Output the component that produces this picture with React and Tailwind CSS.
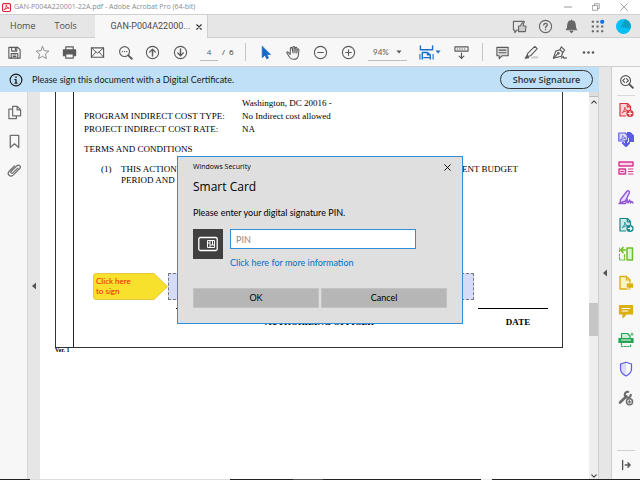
import React, { useState } from 'react';
import { clsx } from 'clsx';

const Icon = ({ size = 16, className, children }) => (
    <svg
        width={size}
        height={size}
        viewBox="0 0 16 16"
        fill="none"
        stroke="currentColor"
        strokeWidth="1.2"
        strokeLinejoin="round"
        strokeLinecap="round"
        className={className}
        aria-hidden="true"
    >
        {children}
    </svg>
);

const fileIcons = [
    { label: 'Save', art: <><path d="M2 2.5h9.5l2.5 2.5v9H2z" /><path d="M5 2.5v4h5.5v-4M4.5 14V9h7v5M6.5 10.7h3M6.5 12.4h3" /><path d="M9 3.5v2" /></> },
    { label: 'Star', className: 'text-[#8a8a8a]', art: <path d="M8 1.6l1.9 4.5 4.9.4-3.7 3.2 1.1 4.8L8 12l-4.2 2.5 1.1-4.8L1.2 6.5l4.9-.4z" strokeWidth="1" /> },
    { label: 'Print', art: <><path d="M4 5V2h8v3" /><path d="M1.5 5.2h13v6.3H12V9.5H4v2H1.5z" fill="currentColor" /><path d="M4 9.5h8V14H4z" fill="#f7f7f7" /></> },
    { label: 'Email', art: <><path d="M1.5 3h13v10h-13z" /><path d="M1.5 3L8 8.8 14.5 3M1.5 13l4.7-5.5M14.5 13L9.8 7.5" strokeWidth="1" /></> },
    { label: 'Find', art: <><circle cx="7" cy="7" r="5.3" /><path d="M11 11l3.7 3.7" strokeWidth="2" /><path d="M4.7 7h.1M7 7h.1M9.3 7h.1" strokeWidth="1.4" /></> },
    { label: 'Previous page', art: <><circle cx="8" cy="8" r="6.5" /><path d="M8 11.7V4.8M5 7.6l3-3 3 3" strokeWidth="1.5" /></> },
    { label: 'Next page', art: <><circle cx="8" cy="8" r="6.5" /><path d="M8 4.3v6.9M5 8.4l3 3 3-3" strokeWidth="1.5" /></> },
];

const viewIcons = [
    { label: 'Select', className: 'text-[#1469c4]', art: <path d="M4.5 1.5v12l3-2.7 1.8 4 1.9-.9-1.8-3.8H13z" fill="currentColor" strokeWidth=".8" /> },
    { label: 'Hand', art: <path d="M4.5 10L2.3 7.6c-.7-.8-1.9.1-1.3 1l3 4.7c1 1.4 2.3 2 4.2 2 3 0 4.8-1.7 5-4.5l.6-5.6c0-1.1-1.5-1.2-1.7-.1l-.6 3.6.1-5.5c0-1.2-1.6-1.2-1.7 0l-.3 5.2-.5-6c-.1-1.2-1.7-1.1-1.7 0l.1 6-1.2-5.2c-.3-1.1-1.8-.8-1.6.4z" strokeWidth="1.1" /> },
    { label: 'Zoom out', art: <><circle cx="8" cy="8" r="6.5" /><path d="M5 8h6" /></> },
    { label: 'Zoom in', art: <><circle cx="8" cy="8" r="6.5" /><path d="M5 8h6M8 5v6" /></> },
];

const markIcons = [
    { label: 'Comment', art: <><path d="M2 2.5h12v9H7.5l-3 3v-3H2z" fill="#dcdcdc" /><path d="M4.5 5.5h7M4.5 8.3h7" /></> },
    { label: 'Highlight', art: <><path d="M7 14.5h8v-2.5H9z" fill="#cfcfcf" stroke="none" /><path d="M4 9L11.5 1.5l2.6 2.3L7 11.5l-3.7.7z" /><path d="M3.3 11l-2 3.2 3.7-.7z" fill="currentColor" /></> },
    { label: 'Sign', art: <><path d="M1.5 14L4 6.5l4.5-1.5 3 3L10 12z" /><path d="M8.5 5l1.5-3 3.5 3.5-2 2.5M1.5 14L6 9.5" /><circle cx="6.8" cy="8.9" r=".9" /><path d="M10 14l2-1.8.5 1.8 3-.3" /></> },
    { label: 'More tools', art: <g fill="currentColor" stroke="none"><circle cx="3.2" cy="8" r="1.4" /><circle cx="8" cy="8" r="1.4" /><circle cx="12.8" cy="8" r="1.4" /></g> },
];

const pdfSheet = <><path d="M2 1.5h7.5l3 3v4M2 1.5v12.5h5.5" /><path d="M9.3 1.5v3.3h3.2" /><path d="M4.5 10.5C6.5 8.5 7 6.5 6.7 5.3c.6 2.5 2 3.4 3.6 3.5-2 0-4 .4-5.8 1.7z" strokeWidth=".9" /></>;

const tools = [
    { label: 'Create PDF', className: 'text-[#d7373f]', art: <><path d="M2 1.5h8l2.5 3V14H2z" fill="#f9d5d7" stroke="none" />{pdfSheet}<circle cx="12" cy="11.5" r="3.6" fill="currentColor" stroke="none" /><path d="M12 9.7v3.6M10.2 11.5h3.6" stroke="#fff" /></> },
    { label: 'Combine files', className: 'text-[#5c5ce0]', art: <><path d="M9 1h3.5L16 4.5V11h-5V7.5L9 5z" fill="currentColor" stroke="none" /><path d="M.8 2h6.5l2.2 2.5V10H.8z" fill="#dcdcfa" /><path d="M2.8 8.5C4.5 7 5 5.5 4.8 4.5 5.3 6.2 6.3 7 7.5 7z" strokeWidth=".8" /><path d="M8 9.5v5M5 12l3 3 3-3" strokeWidth="2.2" /></> },
    { label: 'Organize pages', className: 'text-[#d83790]', art: <><path d="M1 2h14v4H1zM1 9h6.5v5H1z" fill="#f9d3e7" strokeWidth="1.4" /><path d="M10.5 9h4.5M10.5 11.5h4.5M10.5 14h4.5M3 11.5h2.5" strokeWidth="1" /></> },
    { label: 'Fill and sign', className: 'text-[#9256d9]', art: <><path d="M2.5 10.5L9 2.2c1-1 3 .1 2.300 1.800L7.500 12l-5.500 2z" fill="#e9dcfa" strokeWidth="1.4" /><path d="M1 14.500h6.500l1.800-4 .7 3.500 1.800-3 .7 3 1.300-1.500 1.200 1.500" strokeWidth="1.4" /></> },
    { label: 'Export PDF', className: 'text-[#16878c]', art: <><path d="M2 1.5h8l2.5 3V14H2z" fill="#cfe9ea" stroke="none" />{pdfSheet}<circle cx="12" cy="11.5" r="3.6" fill="currentColor" stroke="none" /><path d="M10.2 11.5h3.4M12.3 9.9l1.5 1.6-1.5 1.6" stroke="#fff" /></> },
    { label: 'Compare', className: 'text-[#6cbf2c]', art: <><path d="M9 2h5.5v12H9z" fill="#e0f4cf" strokeWidth="1.5" /><path d="M1.5 8v6h5M1.5 5.5V2M6.5 8.5v5.5" strokeDasharray="2 1.3" /><path d="M5 1.5L2.8 4 5 6.500M3 4h4.500" strokeWidth="1.7" /></> },
    { label: 'Prepare form', className: 'text-[#dbb112]', art: <><path d="M2 1.5h6.5l3.5 3.5v9H2z" fill="#fbf1c5" strokeWidth="1.4" /><path d="M8.5 1.5V5H12" /><path d="M8.5 8h7v5h-2.800l-2 2v-2H8.500z" fill="currentColor" stroke="#f8f8f8" strokeWidth=".7" /></> },
    { label: 'Comment tool', className: 'text-[#dbb112]', art: <><path d="M1.5 2.5h13v8.5H8.2L5 14.5V11H1.5z" fill="currentColor" /><path d="M4.2 5.5h7.6M4.2 8h5.6" stroke="#fff" /></> },
    { label: 'Scan and OCR', className: 'text-[#23a455]', art: <><path d="M3.5 6V1.5h6L12 4v2" fill="#d0efda" /><path d="M1 6.5h14v4H1z" fill="currentColor" /><path d="M3.5 8h9" stroke="#f8f8f8" /><path d="M3.5 11.5v3h9v-3" strokeDasharray="1.5 1.5" /><path d="M14 1v2.5M12.8 2.2h2.4" strokeWidth=".8" /></> },
    { label: 'Protect', className: 'text-[#5c5ce0]', art: <><path d="M8 1.2L2.5 3v5c0 3 2 5.3 5.5 7z" fill="#dcdcfa" stroke="none" /><path d="M8 1.2L13.5 3v5c0 3-2 5.3-5.5 7-3.5-1.7-5.5-4-5.5-7V3z" /></> },
    { label: 'More tools panel', className: 'text-[#6e6e6e]', art: <><path d="M2 12.5L8.5 6.3" strokeWidth="2.6" /><path d="M12.8 4.8a3 3 0 1 1-2.6-3" strokeWidth="2.2" /><circle cx="11.5" cy="11.8" r="3" fill="#f8f8f8" strokeWidth="1.5" /><path d="M11.5 10.6v2.4M10.3 11.8h2.4" /></> },
];

function IconButtons({ items, className, size }) {
    return (
        <div className={clsx('grid items-center', className)}>
            {items.map(item => (
                <button key={item.label} type="button" aria-label={item.label} className={clsx('flex justify-center', item.className)}>
                    <Icon size={size}>{item.art}</Icon>
                </button>
            ))}
        </div>
    );
}

function TitleBar() {
    return (
        <header className="flex h-[14px] shrink-0 items-center bg-white pl-[2px] pr-3 text-[#8c8c8c]">
            <Icon size={9} className="text-[#d7262e]">
                <rect x="1" y="1" width="14" height="14" rx="2" fill="#fff" strokeWidth="2" />
                <path d="M4 12C7 9 8 6 7.5 3.5 8.5 7.5 10 9 12.5 9 9.5 9 6.5 10 4 12z" strokeWidth="1.7" />
            </Icon>
            <h1 className="ml-[3px] flex-1 text-[7px] leading-3">GAN-P004A220001-22A.pdf - Adobe Acrobat Pro (64-bit)</h1>
            <div className="flex items-center gap-5">
                <button type="button" aria-label="Minimize"><Icon size={8}><path d="M1 8h14" strokeWidth="1.8" /></Icon></button>
                <button type="button" aria-label="Restore"><Icon size={8}><path d="M1.5 5h9.5v9.5H1.5zM5 5V1.5h9.5V11H11" strokeWidth="1.6" /></Icon></button>
                <button type="button" aria-label="Close window"><Icon size={8}><path d="M1.5 1.5l13 13M14.5 1.5l-13 13" strokeWidth="1.6" /></Icon></button>
            </div>
        </header>
    );
}

function TabBar() {
    return (
        <nav className="flex h-6 shrink-0 border-t border-[#cfcfcf] bg-[#e6e6e6] text-[9px] text-[#4b4b4b]">
            <button type="button" className="border-b border-[#cfcfcf] pl-[10px] pr-[9px]">Home</button>
            <button type="button" className="w-[51px] border-b border-[#cfcfcf] pl-[10px] text-left">Tools</button>
            <button type="button" className="flex w-[113px] items-center justify-end gap-[6px] border-r border-[#cfcfcf] bg-[#f7f7f7] pr-[5px]">
                <span className="font-[Roboto,sans-serif]">GAN-P004A22000...</span>
                <Icon size={6} className="text-[#333]"><path d="M2 2l12 12M14 2L2 14" strokeWidth="3" /></Icon>
            </button>
            <div className="flex flex-1 items-center justify-end gap-[11px] border-b border-[#cfcfcf] pr-[9px] text-[#666]">
                <button type="button" aria-label="Feedback">
                    <Icon size={15}>
                        <path d="M7 2.5H1.5v9.2H3v2.8l2.5-2.8h1M7 2.5h6V4" />
                        <path d="M7 7.5h1.8L11 4c1.3-.2 1.5 1 1 3.5h3l-.8 6H7z" fill="#ccc" />
                    </Icon>
                </button>
                <button type="button" aria-label="Help">
                    <Icon size={15}><circle cx="8" cy="8" r="6.5" /><path d="M6.2 6.5c0-2.5 3.7-2.3 3.7-.2C9.9 7.7 8 7.7 8 9.3M8 11.4v.1" strokeWidth="1.4" /></Icon>
                </button>
                <button type="button" aria-label="Notifications">
                    <Icon size={15}><path d="M8 2C5 2 4 4.5 4 7c0 2.5-.6 3.5-1.5 4.5h11C12.6 10.5 12 9.5 12 7c0-2.5-1-5-4-5zM6.5 13h3L8 14.5zM8 1.2V2" fill="currentColor" /></Icon>
                </button>
                <button type="button" aria-label="Apps">
                    <Icon size={15}>
                        <path d="M3 3h.1M8 3h.1M3 8h.1M8 8h.1M13 8h.1M3 13h.1M8 13h.1M13 13h.1" strokeWidth="2.2" strokeLinecap="square" />
                        <circle cx="13" cy="3" r="2.3" fill="#1473e6" stroke="none" />
                    </Icon>
                </button>
                <button type="button" aria-label="Account">
                    <Icon size={15}><circle cx="8" cy="8" r="8" fill="#00c0f5" stroke="none" /><path d="M9.5.2A8 8 0 0 1 15.5 10L5 8.5z" fill="#0f9fc0" stroke="none" /></Icon>
                </button>
            </div>
        </nav>
    );
}

function Toolbar({ page, setPage }) {
    return (
        <div className="flex h-7 shrink-0 items-center bg-[#f7f7f7] pl-px text-[8px] text-[#5a5a5a]">
            <IconButtons items={fileIcons} size={15} className="w-[193px] grid-cols-7" />
            <input
                aria-label="Page number"
                value={page}
                onChange={e => setPage(e.target.value)}
                className="ml-[6px] h-[18px] w-[18px] border-b border-[#bdbdbd] text-center text-[#4b5a8a] outline-none"
            />
            <span className="ml-[4px] w-[23px] whitespace-pre text-[#333]">/  6</span>
            <div className="h-[18px] w-px bg-[#c6c6c6]" />
            <IconButtons items={viewIcons} size={15} className="ml-[6px] w-[110px] grid-cols-4" />
            <button type="button" className="ml-[6px] flex h-[18px] w-[39px] items-center justify-between border-b border-[#bdbdbd] px-[5px] font-[Lato,sans-serif]">
                94%
                <Icon size={6}><path d="M1 4h14l-7 8z" fill="currentColor" stroke="none" /></Icon>
            </button>
            <button type="button" aria-label="Fit width" className="ml-[12px] flex items-center gap-px text-[#1b6fc8]">
                <Icon size={15}>
                    <path d="M1.5 1v4h13V1M3.5 15V8H9l3 2.5V15M9 8v2.5h3" strokeWidth="1.5" />
                    <path d="M1 10v5M15 10v5M5 13.5h6" />
                </Icon>
                <Icon size={6}><path d="M1 4h14l-7 8z" fill="currentColor" stroke="none" /></Icon>
            </button>
            <button type="button" aria-label="Page display" className="ml-[13px]">
                <Icon size={15}><path d="M1 2h14v4.5H1zM8 8.5v6M5.5 11.8L8 14.3l2.5-2.5" /><path d="M3.5 4.3h9" strokeDasharray=".5 2" /></Icon>
            </button>
            <div className="ml-[13px] h-[18px] w-px bg-[#c6c6c6]" />
            <IconButtons items={markIcons} size={15} className="ml-[5px] w-[115px] grid-cols-4" />
        </div>
    );
}

function SignBanner() {
    return (
        <div className="flex h-[25px] shrink-0 items-center bg-[#bfe0f6] pl-[9px] pr-[6px] text-[#1a1a1a]">
            <Icon size={14}><circle cx="8" cy="8" r="6.7" strokeWidth="1.3" /><path d="M8 7.5v4M6.8 7.5H8M6.8 11.5h2.4" strokeWidth="1.5" /><circle cx="8" cy="4.7" r="1" fill="currentColor" stroke="none" /></Icon>
            <p className="ml-[9px] flex-1 font-[Lato,sans-serif] text-[9px]">Please sign this document with a Digital Certificate.</p>
            <button type="button" className="h-[19px] w-[93px] rounded-full border border-[#333] text-[9px] font-semibold text-[#333]">
                Show Signature
            </button>
        </div>
    );
}

function NavRail() {
    return (
        <aside className="flex w-[27px] shrink-0 flex-col items-center gap-[14px] bg-[#f7f7f7] pl-px pt-[13px] text-[#6e6e6e]">
            <button type="button" aria-label="Page thumbnails">
                <Icon size={15}><path d="M6 1.5h5L14.5 5v6.5H6zM10.8 1.5v3.7h3.7M6 4.5H2v10h8v-3" strokeWidth="1.3" /></Icon>
            </button>
            <button type="button" aria-label="Bookmarks">
                <Icon size={15}><path d="M3.5 1.5h9v13L8 10.5l-4.5 4z" strokeWidth="1.4" /></Icon>
            </button>
            <button type="button" aria-label="Attachments">
                <Icon size={15}><path d="M11.5 5.5l-5.3 5c-1.2 1.2-2.9-.4-1.7-1.7l6-5.8c2.2-2 5 .7 3 2.9l-7 7c-3 2.7-7-.9-4.2-4.1L8 3" strokeWidth="1.3" /></Icon>
            </button>
        </aside>
    );
}

function Collapser({ label, className }) {
    return (
        <button type="button" aria-label={label} className={clsx('flex shrink-0 justify-center bg-[#e6e6e6] text-[#555]', className)}>
            <Icon size={8}><path d="M12 1v14L4 8z" fill="currentColor" stroke="none" /></Icon>
        </button>
    );
}

function PdfPage() {
    return (
        <article className="min-w-0 flex-1 overflow-hidden bg-white pl-[15px] font-['Liberation_Serif',serif] text-[9px] leading-[11px] text-black">
            <div className="mr-[26px] flex border-x border-b border-[#333]">
                <div className="w-[18px] shrink-0 border-r border-[#222]" />
                <div className="min-w-0 flex-1 pb-[19px] pl-[10px] pt-[6px]">
                    <dl className="grid grid-cols-[158px_1fr] gap-y-[2px]">
                        <dt />
                        <dd>Washington, DC 20016 -</dd>
                        <dt>PROGRAM INDIRECT COST TYPE:</dt>
                        <dd>No Indirect cost allowed</dd>
                        <dt>PROJECT INDIRECT COST RATE:</dt>
                        <dd>NA</dd>
                    </dl>
                    <h2 className="mt-[9px]">TERMS AND CONDITIONS</h2>
                    <div className="mt-[9px] flex pl-[17px] pr-11">
                        <span className="w-5">(1)</span>
                        <div className="flex-1">
                            <p className="flex justify-between">
                                <span>THIS ACTION</span>
                                <span>CURRENT BUDGET</span>
                            </p>
                            <p>PERIOD AND</p>
                        </div>
                    </div>
                    <div className="mt-[87px] flex pl-[9px]">
                        <div className="relative flex h-[27px] w-[75px] shrink-0 font-['Open_Sans',sans-serif] text-[8px] leading-[10px] text-[#f0200c]">
                            <svg viewBox="0 0 75 27" className="absolute inset-0 size-full" aria-hidden="true">
                                <path d="M3 .5h58l13.5 13L61 26.5H3q-2.5 0-2.5-2.5V3Q.5.5 3 .5z" fill="#f8e12c" stroke="#e8c840" />
                            </svg>
                            <p className="relative py-[3px] pl-[3px] font-[Lato,sans-serif]">Click here<br />to sign</p>
                        </div>
                        <button type="button" aria-label="Signature field" className="mr-[88px] flex-1 border border-dashed border-[#777] bg-[#d6dcf8]" />
                    </div>
                    <div className="mt-[8px] flex justify-between pl-[92px] pr-[14px] text-center font-bold">
                        <div className="w-[287px] border-t border-black pt-[8px]">AUTHORIZING OFFICER</div>
                        <div className="w-[70px] border-t border-black pl-[10px] pt-[8px]">DATE</div>
                    </div>
                </div>
            </div>
            <p className="text-[6px] font-bold leading-[4px]">Ver. 1</p>
        </article>
    );
}

function ScrollBar() {
    return (
        <div className="flex w-[10px] shrink-0 flex-col items-center border-r border-[#cfcfcf] bg-[#eee] text-[#444]">
            <div className="h-[5px] w-full border-b border-[#bbb] bg-[#ddd]" />
            <button type="button" aria-label="Scroll up" className="pt-[2px]"><Icon size={6}><path d="M2 11l6-6 6 6" strokeWidth="3" /></Icon></button>
            <div className="flex-[200]" />
            <div className="h-[33px] w-full bg-[#c6c6c6]" />
            <div className="flex-[138]" />
            <button type="button" aria-label="Scroll down"><Icon size={6}><path d="M2 5l6 6 6-6" strokeWidth="3" /></Icon></button>
        </div>
    );
}

function ToolRail() {
    return (
        <aside className="flex w-7 shrink-0 flex-col items-center bg-[#f8f8f8] pt-[7px] text-[#555]">
            <button type="button" aria-label="Search tools">
                <Icon size={15}><circle cx="7" cy="7" r="5.3" /><path d="M11 11l3.7 3.7" strokeWidth="2" /><path d="M6 5L4 7l2 2M8 5l2 2-2 2" /></Icon>
            </button>
            <div className="mt-[6px] h-px w-[18px] bg-[#d8d8d8]" />
            <IconButtons items={tools} size={16} className="h-[316px] grid-rows-11" />
            <div className="mt-auto h-px w-[18px] bg-[#d0d0d0]" />
            <button type="button" aria-label="Collapse tools" className="mb-[8px] mt-[8px]">
                <Icon size={12}><path d="M3.5 2v12M7 8h6.5M10.5 5L13.5 8l-3 3" strokeWidth="1.8" /></Icon>
            </button>
        </aside>
    );
}

// sliver of the desktop and taskbar below the window
function BottomEdge() {
    return (
        <div className="flex h-px shrink-0">
            <div className="flex-[30] bg-[#222]" />
            <div className="flex-[200] bg-[#ddd]" />
            <div className="flex-[63] bg-[#222]" />
            <div className="flex-[30] bg-[#555]" />
            <div className="flex-[158] bg-[#222]" />
            <div className="flex-[11] bg-[#eee]" />
            <div className="flex-[148] bg-[#222]" />
        </div>
    );
}

function PinDialog({ onClose }) {
    const [pin, setPin] = useState('');

    return (
        <div className="fixed inset-0 flex items-center justify-center">
            <form
                role="dialog"
                aria-label="Windows Security"
                onSubmit={e => e.preventDefault()}
                className="w-[286px] border border-[#2f8fdc] bg-[#dfdfdf] px-[15px] pb-[15px] pt-[4px] font-[Lato,sans-serif] text-[9px] leading-3 text-black"
            >
                <div className="flex items-center justify-between font-['Open_Sans',sans-serif]">
                    <span className="text-[7px]">Windows Security</span>
                    <button type="button" aria-label="Close" onClick={onClose} className="-mr-[4px]">
                        <Icon size={7}><path d="M1.5 1.5l13 13M14.5 1.5l-13 13" strokeWidth="2" /></Icon>
                    </button>
                </div>
                <h2 className="mt-[6px] font-['Open_Sans',sans-serif] text-[12px] leading-4">Smart Card</h2>
                <label htmlFor="pin" className="mt-[12px] block">Please enter your digital signature PIN.</label>
                <div className="mt-[10px] flex gap-[7px]">
                    <div className="flex size-[30px] items-center justify-center bg-[#404040] text-white">
                        <svg width="20" height="16" viewBox="0 0 20 16" fill="none" stroke="currentColor" aria-hidden="true">
                            <rect x=".8" y="1.5" width="18.4" height="13" rx="1.5" strokeWidth="1.3" />
                            <path d="M9.5 4.5h7v7h-7zM9.5 7h2.5M12 4.5v7M14.5 4.5v4.5M12 9h4.5" />
                        </svg>
                    </div>
                    <div>
                        <input
                            id="pin"
                            type="password"
                            value={pin}
                            onChange={e => setPin(e.target.value)}
                            placeholder="PIN"
                            className="block h-5 w-[186px] border border-[#2f8fdc] bg-white px-[5px] placeholder:text-[#8c8c8c] outline-none"
                        />
                        <a href="#info" className="mt-[8px] block text-[#0070c9]">Click here for more information</a>
                    </div>
                </div>
                <div className="mt-[19px] grid grid-cols-2 gap-[2px]">
                    <button type="submit" className="h-5 border border-[#c2c2c2] bg-[#b6b6b6]">OK</button>
                    <button type="button" onClick={onClose} className="h-5 border border-[#c2c2c2] bg-[#b6b6b6]">Cancel</button>
                </div>
            </form>
        </div>
    );
}

function App() {
    const [page, setPage] = useState('4');
    const [dialogOpen, setDialogOpen] = useState(true);

    return (
        <div className="flex h-screen flex-col overflow-hidden bg-white font-['Open_Sans','Noto_Sans',sans-serif]">
            <TitleBar />
            <TabBar />
            <Toolbar page={page} setPage={setPage} />
            <main className="flex min-h-0 flex-1 border-t border-[#cfcfcf]">
                <div className="flex min-w-0 flex-1 flex-col">
                    <SignBanner />
                    <div className="flex min-h-0 flex-1">
                        <NavRail />
                        <Collapser label="Toggle navigation pane" className="w-[13px] items-center border-l border-[#d6d6d6]" />
                        <PdfPage />
                        <ScrollBar />
                    </div>
                </div>
                <Collapser label="Toggle tools pane" className="w-[13px] items-center border-r border-[#cfcfcf]" />
                <ToolRail />
            </main>
            <BottomEdge />
            {dialogOpen && <PinDialog onClose={() => setDialogOpen(false)} />}
        </div>
    );
}

export default App;
